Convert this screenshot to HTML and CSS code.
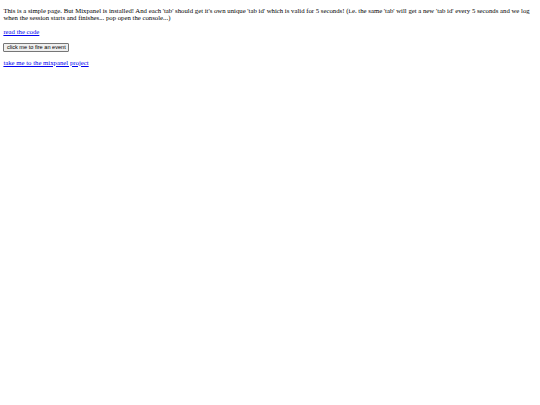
FILE: index.html
```html
<!DOCTYPE html>
<html>
<head>
<meta charset="utf-8">
<link rel="stylesheet" href="styles.css">
</head>
<body class="page">
<p class="text intro">This is a simple page. But Mixpanel is installed! And each 'tab' should get it's own unique 'tab id' which is valid for 5 seconds! (i.e. the same 'tab' will get a new 'tab id' every 5 seconds and we log when the session starts and finishes... pop open the console...)</p>
<p class="text"><a class="link" href="#">read the code</a></p>
<p class="text action"><button class="btn">click me to fire an event</button></p>
<p class="text"><a class="link" href="#">take me to the mixpanel project</a></p>
</body>
</html>
```
FILE: styles.css
```css
html { background: #fff; }
.page {
  margin: 0 3.375px 3.375px;
  padding-top: 0.1px;
  font-family: "Liberation Serif", "Times New Roman", serif;
  font-size: 6.75px;
  color: #000;
}
.text { margin: 6.75px 0; }
.intro { margin-top: 7px; }
.action { margin-top: 8px; margin-bottom: 5px; }
.link { color: #0000ee; text-decoration: underline; }
.btn {
  font-family: "Liberation Sans", Arial, sans-serif;
  font-size: 5.625px;
  padding: 0.5px 2.5px;
  border: 0.85px solid #767676;
  border-radius: 1px;
  background: #efefef;
  color: #000;
  margin: 0;
}
```
